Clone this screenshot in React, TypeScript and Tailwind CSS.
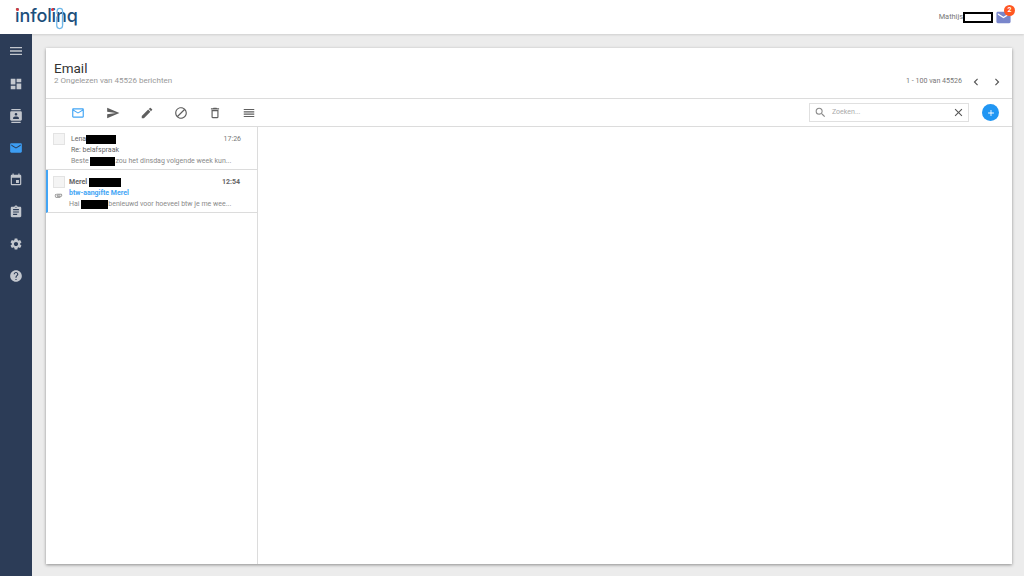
import React from "react";
import {
  MdAdd,
  MdAttachment,
  MdBlock,
  MdChevronLeft,
  MdChevronRight,
  MdClose,
  MdContacts,
  MdDashboard,
  MdDeleteOutline,
  MdEdit,
  MdEmail,
  MdEvent,
  MdAssignment,
  MdHelp,
  MdMailOutline,
  MdMenu,
  MdReorder,
  MdSearch,
  MdSend,
  MdSettings,
} from "react-icons/md";

const Logo = () => (
  <div className="relative flex h-[34px] w-[62px] items-center pb-[2px] font-['Inter',sans-serif] text-[18px] font-medium leading-none tracking-[-0.1px] text-[#1d4f7c]">
    <span>infolinq</span>
    <span className="absolute left-[1px] top-[8px] h-[3px] w-[3px] rounded-full bg-[#d9363e]" />
    <span className="absolute left-[36px] top-[8px] h-[3px] w-[3px] rounded-full bg-[#d9363e]" />
    <svg className="absolute left-[40px] top-[4px]" width="10" height="29" viewBox="0 0 12 29" fill="none" stroke="#6db6e8" strokeWidth="1.5">
      <path d="M2.5 9V5.5a3.3 3.3 0 0 1 6.6 0V23a3.5 3.5 0 0 1-7 0V12" />
      <path d="M9 10v12" />
    </svg>
  </div>
);

const sideIcons = [MdMenu, MdDashboard, MdContacts, MdEmail, MdEvent, MdAssignment, MdSettings, MdHelp];

const Sidebar = () => (
  <aside className="flex w-[32px] shrink-0 flex-col items-center bg-[#2c3c57] pt-[1px]">
    {sideIcons.map((Icon, i) => (
      <div key={i} className={`flex h-8 w-full items-center justify-center ${i === 0 ? "mb-px" : ""}`}>
        <Icon size={i === 0 ? 16 : 14} className={i === 3 ? "text-[#3c9df3]" : "text-[#c3c7ce]"} />
      </div>
    ))}
  </aside>
);

const Redact = ({ w }: { w: string }) => <span className={`inline-block h-[9px] bg-black align-middle ${w}`} />;

const Row = ({
  unread,
  name,
  nameBar,
  time,
  subject,
  before,
  bar,
  after,
}: {
  unread?: boolean;
  name: string;
  nameBar: string;
  time: string;
  subject: string;
  before: string;
  bar: string;
  after: string;
}) => (
  <div className={`flex h-[43px] border-b border-[#dcdcdc] pt-[6px] ${unread ? "border-l-2 border-l-[#42a5f5] pl-[5px]" : "pl-[7px]"}`}>
    <div className={`flex shrink-0 flex-col items-start ${unread ? "w-[16px]" : "w-[18px]"}`}>
      <span className="h-[12px] w-[12px] border border-[#e3e3e3] bg-[#f4f4f4]" />
      {unread && <MdAttachment size={9} className="ml-[1px] mt-[3px] text-[#8a8a8a]" />}
    </div>
    <div className={`mt-px flex min-w-0 flex-1 flex-col text-[7px] leading-[11px] text-[#777] ${unread ? "pr-[17px]" : "pr-[16px]"}`}>
      <div className="flex h-[11px] items-center justify-between">
        <span className={unread ? "font-bold text-[#666]" : "text-[#666]"}>
          {name}
          <Redact w={nameBar} />
        </span>
        <span className={unread ? "font-bold text-[#666]" : "text-[#777]"}>{time}</span>
      </div>
      <div className={`h-[11px] ${unread ? "font-bold text-[#42a5f5]" : "text-[#666]"}`}>{subject}</div>
      <div className="h-[11px] whitespace-nowrap text-[#8a8a8a]">
        {before}
        <Redact w={bar} />
        {after}
      </div>
    </div>
  </div>
);

const toolIcons = [MdMailOutline, MdSend, MdEdit, MdBlock, MdDeleteOutline, MdReorder];

export default function App() {
  return (
    <div className="flex h-[576px] w-[1024px] flex-col overflow-hidden bg-[#ececec] font-['Roboto',sans-serif]">
      <header className="flex h-[34px] shrink-0 items-center justify-between bg-white pl-[15px] pr-[12px] shadow-[0_1px_2px_rgba(0,0,0,0.12)]">
        <Logo />
        <div className="relative flex items-center">
          <span className="text-[7.4px] text-[#777]">Mathijs</span>
          <span className="h-[11px] w-[30px] border-[2px] border-black bg-white" />
          <MdEmail size={17} className="ml-[2px] text-[#7986cb]" />
          <span className="absolute -right-[3px] -top-[4px] flex h-[11px] w-[11px] items-center justify-center rounded-full bg-[#ff5722] text-[7px] font-bold text-white">2</span>
        </div>
      </header>
      <div className="flex min-h-0 flex-1">
        <Sidebar />
        <main className="flex min-w-0 flex-1 pb-[12px] pl-[14px] pr-[12px] pt-[14px]">
          <div className="flex min-w-0 flex-1 flex-col bg-white shadow-[0_1px_3px_rgba(0,0,0,0.4)]">
            <div className="flex h-[51px] shrink-0 justify-between border-b border-[#dcdcdc] pl-[8px] pr-[8px]">
              <div className="pt-[12px]">
                <h1 className="text-[13.5px] leading-[16px] text-[#333]">Email</h1>
                <p className="text-[8px] leading-[10px] text-[#999]">2 Ongelezen van 45526 berichten</p>
              </div>
              <div className="flex items-center pt-[17px] text-[7.1px] text-[#777]">
                <span>1 - 100 van 45526</span>
                <MdChevronLeft size={14} className="ml-[7px] text-[#555]" />
                <MdChevronRight size={14} className="ml-[7px] text-[#555]" />
              </div>
            </div>
            <div className="flex h-[28px] shrink-0 items-center border-b border-[#dcdcdc] pl-[26px] pr-[13px]">
              <div className="flex gap-[20px]">
                {toolIcons.map((Icon, i) => (
                  <Icon key={i} size={14} className={i === 0 ? "-ml-px mr-px text-[#42a5f5]" : "text-[#5f5f5f]"} />
                ))}
              </div>
              <div className="ml-auto mr-[13px] flex h-[19px] w-[160px] items-center border border-[#e0e0e0] pl-[4px] pr-[3px]">
                <MdSearch size={13} className="text-[#8a8a8a]" />
                <span className="ml-[5px] flex-1 text-[7px] text-[#aaa]">Zoeken...</span>
                <MdClose size={13} className="text-[#555]" />
              </div>
              <div className="flex h-[17px] w-[17px] items-center justify-center rounded-full bg-[#2196f3]">
                <MdAdd size={10} className="text-white" />
              </div>
            </div>
            <div className="flex min-h-0 flex-1">
              <div className="w-[212px] shrink-0 border-r border-[#dcdcdc]">
                <Row
                  name="Lena"
                  nameBar="w-[30px]"
                  time="17:26"
                  subject="Re: belafspraak"
                  before="Beste "
                  bar="w-[25px]"
                  after="zou het dinsdag volgende week kun..."
                />
                <Row
                  unread
                  name="Merel "
                  nameBar="w-[32px]"
                  time="12:54"
                  subject="btw-aangifte Merel"
                  before="Hai "
                  bar="w-[27px]"
                  after="benieuwd voor hoeveel btw je me wee..."
                />
              </div>
            </div>
          </div>
        </main>
      </div>
    </div>
  );
}
